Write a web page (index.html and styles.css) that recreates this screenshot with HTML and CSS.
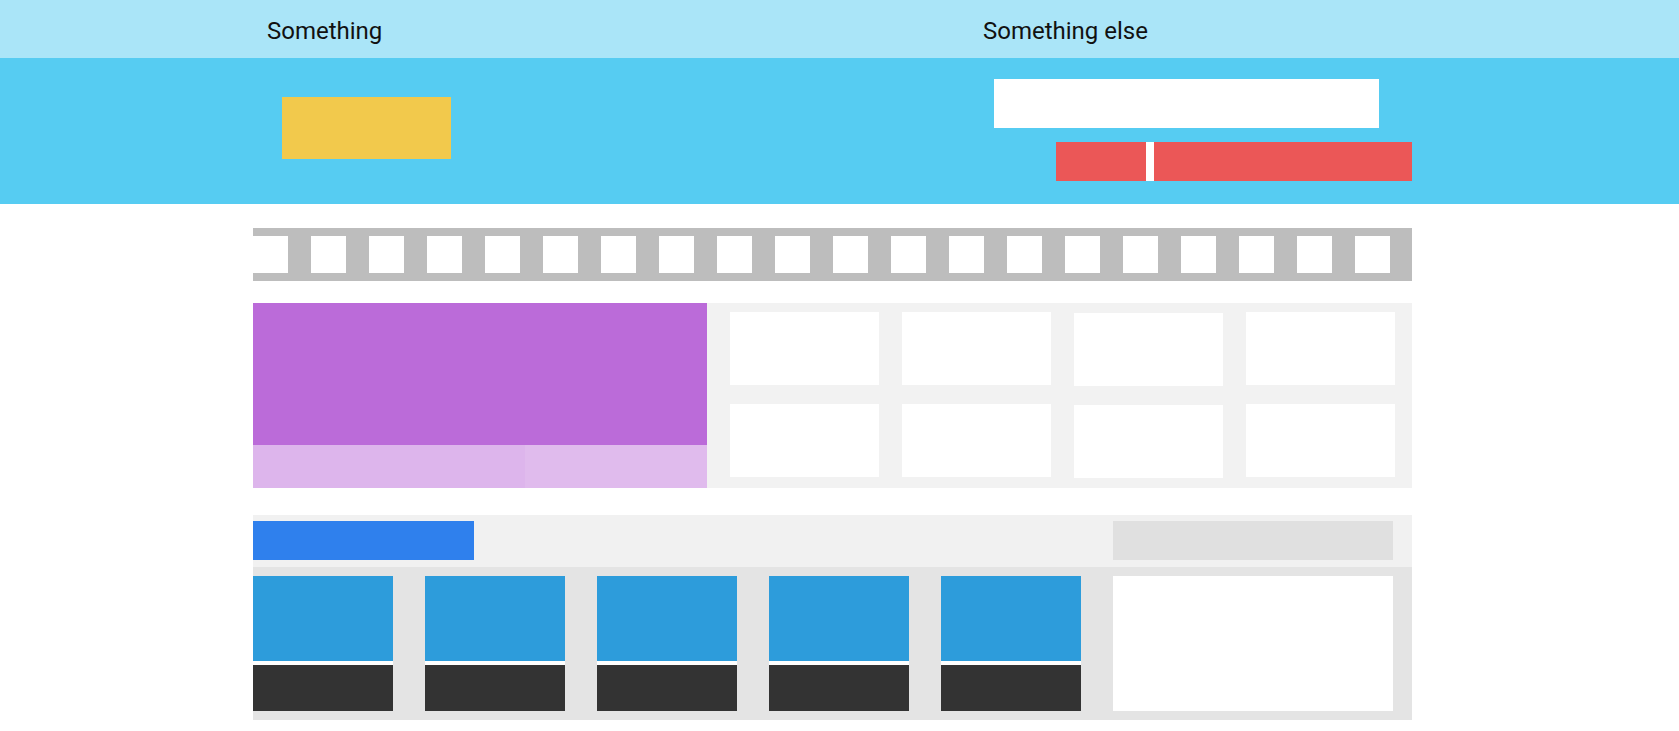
FILE: index.html
```html
<!DOCTYPE html>
<html lang="en">
<head>
<meta charset="utf-8">
<title>Layout</title>
<link rel="stylesheet" href="styles.css">
</head>
<body>
<header class="topbar">
  <div class="wrap split">
    <div class="label first">Something</div>
    <div class="label">Something else</div>
  </div>
</header>
<section class="band">
  <div class="wrap split">
    <div class="band-left">
      <div class="yellow"></div>
    </div>
    <div class="band-right">
      <div class="input"></div>
      <div class="track"><div class="thumb"></div></div>
    </div>
  </div>
</section>
<main class="wrap">
  <div class="film">
    <div class="frame"></div><div class="frame"></div><div class="frame"></div><div class="frame"></div><div class="frame"></div>
    <div class="frame"></div><div class="frame"></div><div class="frame"></div><div class="frame"></div><div class="frame"></div>
    <div class="frame"></div><div class="frame"></div><div class="frame"></div><div class="frame"></div><div class="frame"></div>
    <div class="frame"></div><div class="frame"></div><div class="frame"></div><div class="frame"></div><div class="frame"></div>
  </div>

  <div class="feature">
    <div class="hero">
      <div class="hero-main"></div>
      <div class="hero-foot">
        <div class="hero-a"></div>
        <div class="hero-b"></div>
      </div>
    </div>
    <div class="tiles">
      <div class="tile"></div><div class="tile"></div><div class="tile shift"></div><div class="tile"></div>
      <div class="tile"></div><div class="tile"></div><div class="tile shift"></div><div class="tile"></div>
    </div>
  </div>

  <div class="panel">
    <div class="panel-head">
      <div class="btn"></div>
      <div class="field"></div>
    </div>
    <div class="panel-body">
      <div class="card"><div class="card-img"></div><div class="card-foot"></div></div>
      <div class="card"><div class="card-img"></div><div class="card-foot"></div></div>
      <div class="card"><div class="card-img"></div><div class="card-foot"></div></div>
      <div class="card"><div class="card-img"></div><div class="card-foot"></div></div>
      <div class="card"><div class="card-img"></div><div class="card-foot"></div></div>
      <div class="side"></div>
    </div>
  </div>
</main>
</body>
</html>
```

FILE: styles.css
```css
* { box-sizing: border-box; }

body {
  margin: 0;
  background: #ffffff;
  font-family: Roboto, "Liberation Sans", sans-serif;
  color: #111111;
}

.wrap {
  margin-left: 253px;
  width: 1159px;
}

.split {
  display: grid;
  grid-template-columns: 730px 1fr;
}

/* header */
.topbar {
  background: #aae5f8;
  height: 58px;
}
.topbar .split {
  height: 58px;
  padding-top: 17px;
}
.label {
  font-size: 24px;
  line-height: 28px;
}
.label.first { padding-left: 14px; }

/* blue band */
.band {
  background: #56ccf2;
}
.band .split {
  padding: 21px 0 23px;
}
.yellow {
  margin-left: 29px;
  margin-top: 18px;
  width: 169px;
  height: 62px;
  background: #f2c94c;
}
.band-right {
  display: flex;
  flex-direction: column;
}
.input {
  margin-left: 11px;
  width: 385px;
  height: 49px;
  background: #ffffff;
}
.track {
  margin-top: 14px;
  margin-left: 73px;
  height: 39px;
  background: #eb5757;
  display: flex;
}
.thumb {
  margin-left: 90px;
  width: 8px;
  background: #ffffff;
}

/* filmstrip */
.film {
  margin-top: 24px;
  background: #bdbdbd;
  display: flex;
  gap: 23px;
  padding: 8px 22px 8px 0;
  overflow: hidden;
}
.frame {
  flex: 0 0 35px;
  height: 37px;
  background: #ffffff;
}

/* feature */
.feature {
  margin-top: 22px;
  display: flex;
  height: 185px;
}
.hero {
  width: 454px;
  display: flex;
  flex-direction: column;
}
.hero-main {
  height: 142px;
  background: #bb6bd9;
}
.hero-foot {
  flex: 1;
  display: flex;
}
.hero-a {
  width: 272px;
  background: #ddb5ec;
}
.hero-b {
  flex: 1;
  background: #e0bbed;
}
.tiles {
  flex: 1;
  background: #f2f2f2;
  padding: 9px 17px 11px 23px;
  display: grid;
  grid-template-columns: repeat(4, 149px);
  grid-auto-rows: 73px;
  column-gap: 23px;
  row-gap: 19px;
}
.tile {
  background: #ffffff;
}
.tile.shift { margin-top: 1px; margin-bottom: -1px; }

/* bottom panel */
.panel {
  margin-top: 27px;
}
.panel-head {
  background: #f1f1f1;
  height: 52px;
  padding: 6px 19px 7px 0;
  display: flex;
  justify-content: space-between;
}
.btn {
  width: 221px;
  background: #2f80ed;
}
.field {
  width: 280px;
  background: #e0e0e0;
}
.panel-body {
  background: #e4e4e4;
  padding: 9px 19px 9px 0;
  display: flex;
  gap: 32px;
}
.card {
  width: 140px;
  background: #ffffff;
  display: flex;
  flex-direction: column;
  gap: 4px;
}
.card-img {
  height: 85px;
  background: #2d9cdb;
}
.card-foot {
  height: 46px;
  background: #333333;
}
.side {
  width: 280px;
  height: 135px;
  background: #ffffff;
}
```
